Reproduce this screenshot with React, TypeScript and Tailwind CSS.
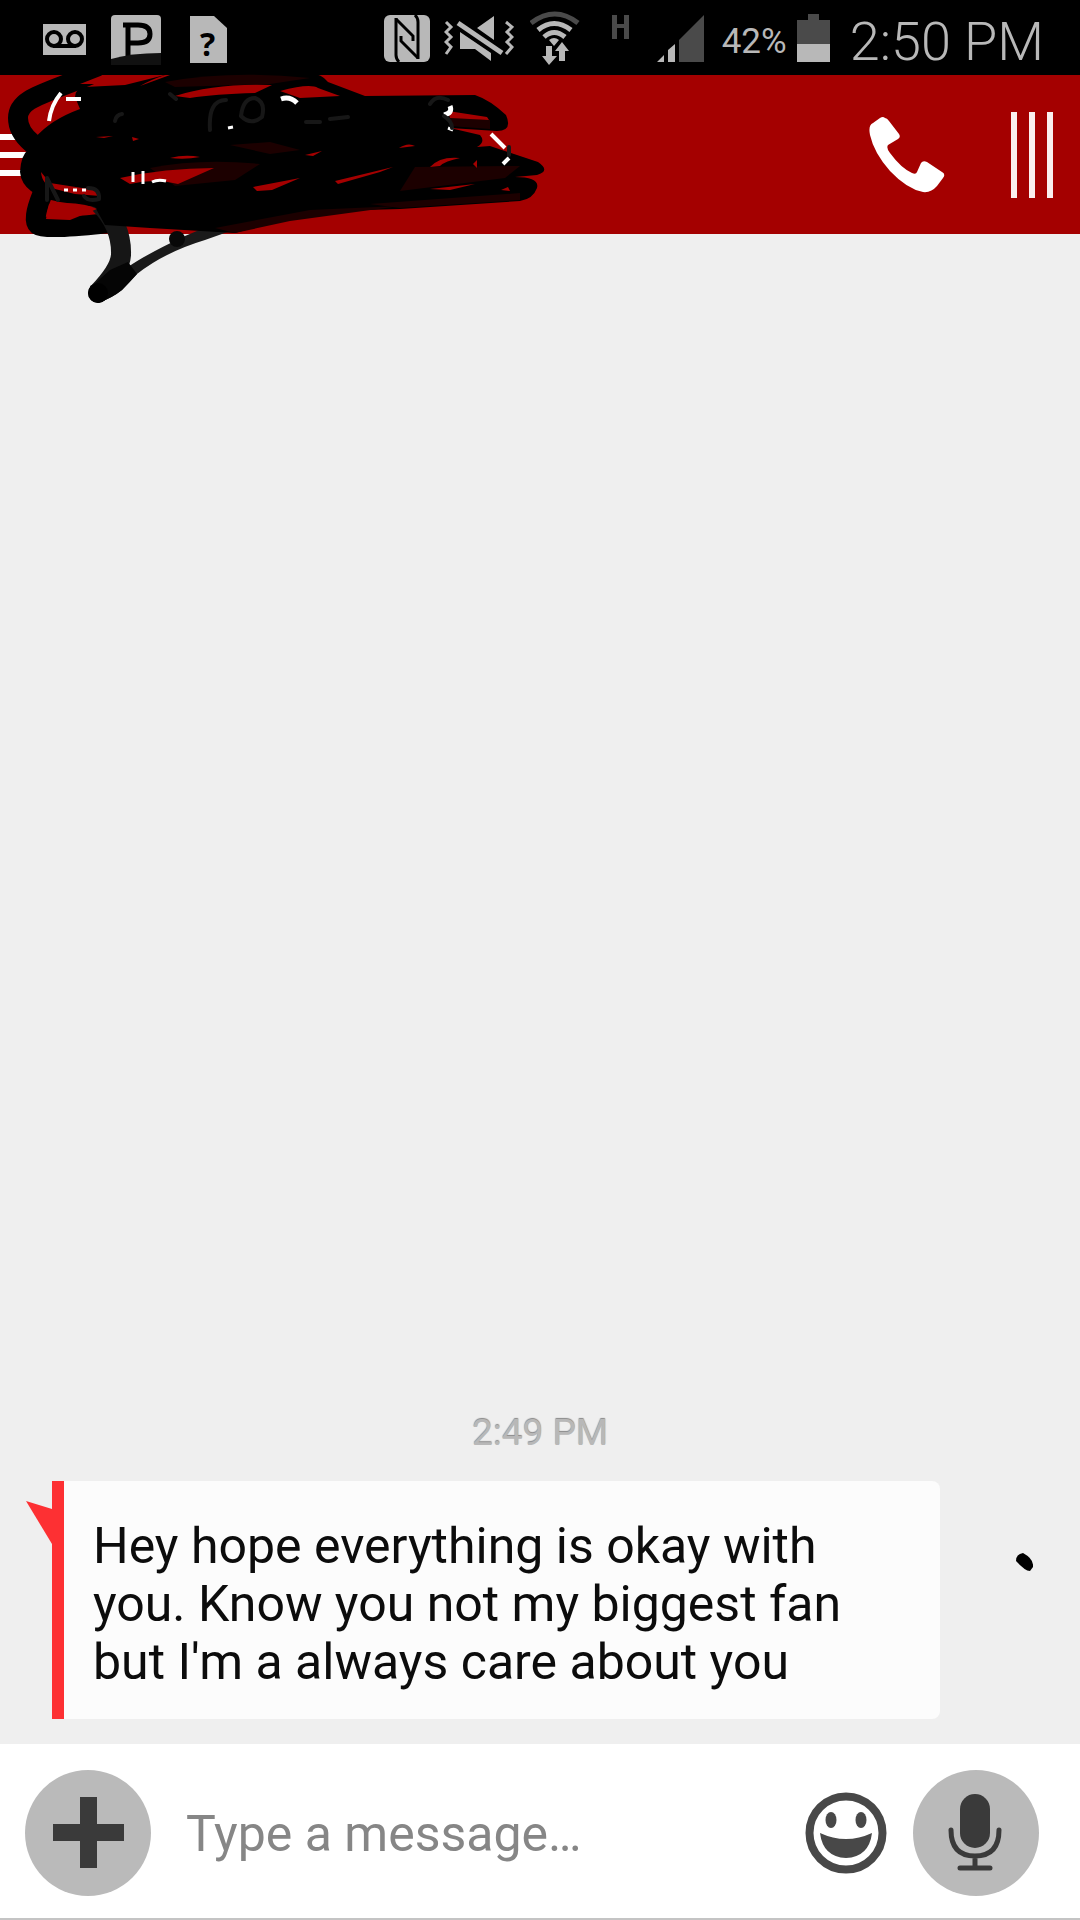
function StatusBar() {
  return (
    <div className="flex h-[75px] items-center bg-black pr-9 pl-[43px] text-[#b8b8b8]">
      <div className="flex items-center">
        <svg className="h-[75px] w-[43px]" viewBox="43 0 43 75">
          <path d="M43 24h43v31H43z" fill="#b8b8b8" />
          <g fill="none" stroke="#000" strokeWidth="4">
            <circle cx="54" cy="39" r="7" />
            <circle cx="75" cy="39" r="7" />
            <path d="M53 46h23" />
          </g>
        </svg>
        <svg className="ml-[25px] h-[75px] w-[50px]" viewBox="111 0 50 75">
          <rect x="111" y="15" width="50" height="49" rx="4" fill="#b8b8b8" />
          <path d="M123 25h15q12 0 12 9t-12 9h-10M128 25v31" fill="none" stroke="#000" strokeWidth="5" />
          <path d="M111 59q20-6 50-6v12h-50z" fill="#111" />
        </svg>
        <svg className="ml-[29px] h-[75px] w-[37px]" viewBox="190 0 37 75">
          <path d="M190 16h24l13 12v35h-37z" fill="#b8b8b8" />
          <text x="200" y="56" fontSize="32" fontWeight="700" fontFamily="Open Sans, sans-serif">?</text>
        </svg>
      </div>

      <div className="ml-auto flex items-center">
        <svg className="h-[75px] w-[46px]" viewBox="385 0 46 75">
          <rect x="385" y="15" width="46" height="47" rx="6" fill="#b8b8b8" />
          <path d="M397 18v37q0 4 3 7M419 59V22q0-4-3-7" fill="none" stroke="#000" strokeWidth="3" />
          <path d="M397 19L414 36V41M419 58L402 41V36" fill="none" stroke="#000" strokeWidth="3" />
        </svg>
        <svg className="ml-3.5 h-[75px] w-[70px]" viewBox="445 0 70 75">
          <path d="M461 32l31 21v8l-16-12h-15zM478 28l17-12v24z" fill="#b8b8b8" />
          <path d="M459 23l44 30" stroke="#000" strokeWidth="11" />
          <path d="M459 23l44 30" stroke="#b8b8b8" strokeWidth="5" />
          <path d="M447 22l5 5-5 5 5 5-5 5 5 5-5 7M507 22l6 5-5 5 5 5-5 5 5 5-6 7" fill="none" stroke="#b8b8b8" strokeWidth="3" />
        </svg>
        <svg className="ml-4 h-[75px] w-[50px]" viewBox="531 0 50 75" fill="none">
          <path d="M532 23q24-18 47 0" stroke="#4a4a4a" strokeWidth="5" />
          <path d="M539 30q16-13 33 0M545 37q10-9 21 0" stroke="#b8b8b8" strokeWidth="5" />
          <path d="M550 40q5-4 10 0l-5 6zM547 46h6v10h5l-8 9-7-9h4zM560 61V51h-4l7-9 7 9h-4v10z" fill="#b8b8b8" />
        </svg>
        <svg className="ml-[29px] h-[75px] w-[22px]" viewBox="610 0 22 75">
          <path d="M613 15h5v9h7v-9h5v24h-5V28h-7v11h-5z" fill="#4a4a4a" />
        </svg>
        <svg className="ml-[26px] h-[75px] w-[47px]" viewBox="658 0 47 75">
          <path d="M658 62l7-7v7zM669 62V50l7-6v18z" fill="#b8b8b8" />
          <path d="M680 62V40l25-25v47z" fill="#4a4a4a" />
        </svg>
        <span className="ml-4.5 pt-2 text-[35px] leading-10">42%</span>
        <svg className="ml-2.5 h-[75px] w-[33px]" viewBox="798 0 33 75">
          <path d="M798 20h11v-6h11v6h11v24h-33z" fill="#4a4a4a" />
          <path d="M798 44h33v18h-33z" fill="#b8b8b8" />
        </svg>
        <span className="ml-5 pt-2 text-[54px] leading-[60px] font-light">2:50 PM</span>
      </div>
    </div>
  );
}

function Scribble() {
  return (
    <svg className="pointer-events-none absolute top-0 left-0 h-[320px] w-[600px]" viewBox="0 0 600 320" fill="none" strokeLinecap="round" strokeLinejoin="round">
      {/* loose strokes */}
      <g stroke="#000" strokeWidth="20">
        <path d="M92 74C45 94 18 98 18 118C18 138 40 150 60 160" />
        <path d="M42 195Q32 220 38 225Q45 230 110 223" />
      </g>
      <path d="M100 204Q122 226 121 255Q120 270 98 293" stroke="#161616" strokeWidth="20" />
      <path d="M98 303Q112 298 122 290Q130 282 137 274Q165 252 205 240L250 224L235 215L185 236Q145 255 128 267L90 286z" fill="#1a1a1a" />
      <path d="M98 303Q112 298 122 290L137 274L128 262L110 270L92 286z" fill="#050505" />
      <circle cx="98" cy="293" r="10" fill="#000" />
      <circle cx="177" cy="239" r="8" fill="#080808" />
      {/* solid body */}
      <path d="M75 97Q76 87 85 87L125 85L165 75L310 73Q322 74 328 82L365 96L475 95Q490 100 506 115Q513 131 497 131L450 128L480 135Q486 142 477 147L490 146L538 162Q551 171 537 175L515 177Q540 177 537 188Q533 199 520 201L400 209L330 211L290 218L235 233L150 228L105 225L95 207L60 202Q22 195 20 172Q21 155 28 150L35 138Q50 120 80 109Z" fill="#000" />
      {/* thin dark red veils */}
      <g fill="#1c0000">
        <path d="M165 82Q230 70 310 78L270 84L175 87z" />
        <path d="M230 145L270 142L300 150L270 154z" />
        <path d="M150 168Q200 158 260 164L235 180L175 186z" />
        <path d="M415 167L520 166L505 178L400 191z" />
        <path d="M215 228L310 210L400 206L290 221L235 233z" />
        <path d="M370 204L520 193L520 200L400 208z" />
        <path d="M450 118L490 120L490 129L450 126z" />
      </g>
      {/* gaps where the bar shows through */}
      <g fill="#a40000">
        <path d="M103 75H133L120 84H80z" />
        <path d="M165 75Q150 80 140 86L170 75zM175 96Q215 83 272 85L255 93Q215 94 190 98z" />
        <path d="M280 91Q310 83 318 88L340 96L300 98z" />
        <path d="M170 158Q185 154 200 157Q185 160 170 158zM132 137L139 139L133 141zM96 137L113 136L104 138z" />
        <path d="M120 178Q165 168 214 168L178 184Q155 178 130 184z" />
        <path d="M41 172L50 183L95 190L100 196L75 194L55 189Q42 185 41 172z" />
        <path d="M49 204Q82 201 97 209L70 220L46 219z" />
        <path d="M253 187L300 178L272 190L257 191zM335 181L393 167L380 172L338 184z" />
        <path d="M305 155L322 151L313 156zM399 148Q408 142 415 146zM430 167Q440 156 460 158Q445 161 440 166z" />
        <path d="M448 111L487 117L489 120L450 118zM430 189L475 184L450 190zM501 190L508 187L510 191z" />
        <path d="M473 164L477 160L477 168z" />
      </g>
      {/* leftovers of the covered title */}
      <g stroke="#fff" strokeWidth="4" strokeLinecap="butt">
        <path d="M61 93Q51 105 49 121M66 99H81" />
        <path d="M281 99Q290 96 297 103" strokeWidth="5" />
        <path d="M450 106Q453 113 444 115" strokeWidth="5" />
        <path d="M491 134L505 148M509 158L503 164" />
        <path d="M448 128L453 130M228 128L233 127M133 172V182M143 171V184M152 182Q158 179 166 181" strokeWidth="3" />
        <path d="M64 190L86 190" strokeDasharray="4 5" strokeWidth="3" />
      </g>
      <g stroke="#171717" strokeWidth="4">
        <path d="M226 100Q208 100 210 130M241 116Q243 98 255 98Q266 102 262 117Q251 126 241 116" />
        <path d="M430 104Q436 94 448 100M444 116Q452 121 452 128M306 122H320M330 119L348 117M170 94L176 99M509 147V155" />
        <path d="M47 200V178L58 200M88 188Q100 188 99 199Q88 202 84 196M115 121Q116 115 122 114" />
      </g>
    </svg>
  );
}

function Header() {
  return (
    <header className="flex h-[159px] items-center bg-[#a40000] pr-[27px] text-white">
      <button aria-label="Open menu" className="flex h-full w-12 flex-col justify-center gap-3">
        <span className="h-1.5 w-9 bg-white" />
        <span className="h-1.5 w-9 bg-white" />
        <span className="h-1.5 w-9 bg-white" />
      </button>
      <button aria-label="Call" className="ml-auto">
        <svg className="h-[76px] w-[76px]" viewBox="869 117 76 76">
          <path d="M885 118Q887 118 889 121L899 134Q901 137 898 139L888 145Q886 148 890 153Q901 168 912 173Q916 175 917 172L921 163Q923 160 927 162L942 172Q946 174 943 178L937 186Q931 193 923 192Q907 189 890 171Q874 153 870 135Q868 125 873 123L880 118Q883 116 885 118Z" fill="#fff" />
        </svg>
      </button>
      <button aria-label="More" className="ml-[66px] flex h-[86px] gap-3">
        <span className="w-1.5 bg-[#fbeeee]" />
        <span className="w-1.5 bg-[#fbeeee]" />
        <span className="w-1.5 bg-[#fbeeee]" />
      </button>
    </header>
  );
}

function Composer() {
  return (
    <form className="flex h-44 items-center border-b-2 border-[#c4c4c4] bg-white px-[25px] pt-1">
      <button type="button" aria-label="Add attachment" className="shrink-0">
        <svg className="h-[126px] w-[126px]" viewBox="0 0 126 126">
          <circle cx="63" cy="63" r="63" fill="#bababa" />
          <path d="M55 27h17v27h27v17H72v27H55V71H28V54h27z" fill="#3a3a3a" />
        </svg>
      </button>
      <input
        type="text"
        aria-label="Message"
        placeholder="Type a message…"
        className="ml-[35px] h-20 min-w-0 flex-1 pt-0.5 text-[50px] text-black outline-none placeholder:text-[#868686]"
      />
      <button type="button" aria-label="Emoji" className="shrink-0">
        <svg className="h-[82px] w-[82px]" viewBox="0 0 82 82">
          <circle cx="41" cy="41" r="36.5" fill="none" stroke="#484848" strokeWidth="8" />
          <ellipse cx="26" cy="28" rx="5.5" ry="8" fill="#484848" />
          <ellipse cx="56" cy="28" rx="5.5" ry="8" fill="#484848" />
          <path d="M15 41Q41 53 67 41Q64 65 41 66Q18 65 15 41z" fill="#484848" />
        </svg>
      </button>
      <button type="button" aria-label="Record voice message" className="ml-[26px] mr-4 shrink-0">
        <svg className="h-[126px] w-[126px]" viewBox="0 0 126 126">
          <circle cx="63" cy="63" r="63" fill="#bababa" />
          <rect x="47" y="24" width="30" height="54" rx="15" fill="#3a3a3a" />
          <path d="M38 60Q38 86 62 86Q86 86 86 60M62 87v10M47 98h30" fill="none" stroke="#3a3a3a" strokeWidth="5" strokeLinecap="round" />
        </svg>
      </button>
    </form>
  );
}

export default function App() {
  return (
    <div className="relative flex min-h-screen flex-col bg-[#efefef] font-['Roboto',sans-serif]">
      <StatusBar />
      <Header />
      <main className="flex flex-1 flex-col justify-end pb-[25px]">
        <time className="text-center text-[37px] leading-[42px] text-[#b8b8b8] text-shadow-[0_-1px_1px_#888888]">2:49 PM</time>
        <div className="relative mt-[27px] flex pl-[26px]">
          <svg className="h-16 w-[26px]" viewBox="0 0 26 64">
            <path d="M0 20l26 8v35z" fill="#fd3033" />
          </svg>
          <p className="w-[888px] rounded-r-lg border-l-12 border-[#fd3033] bg-[#fcfcfc] pt-9 pr-20 pb-7 pl-[29px] text-[50px] leading-[58px] text-[#0c0c0c]">
            Hey hope everything is okay with you. Know you not my biggest fan but I'm a always care about you
          </p>
          <svg className="absolute top-[72px] right-[47px] h-[18px] w-[17px]" viewBox="0 0 17 18">
            <path d="M0 8Q0 1 7 0Q18 6 17 14L14 18Q9 18 0 8z" />
          </svg>
        </div>
      </main>
      <Composer />
      <Scribble />
    </div>
  );
}
